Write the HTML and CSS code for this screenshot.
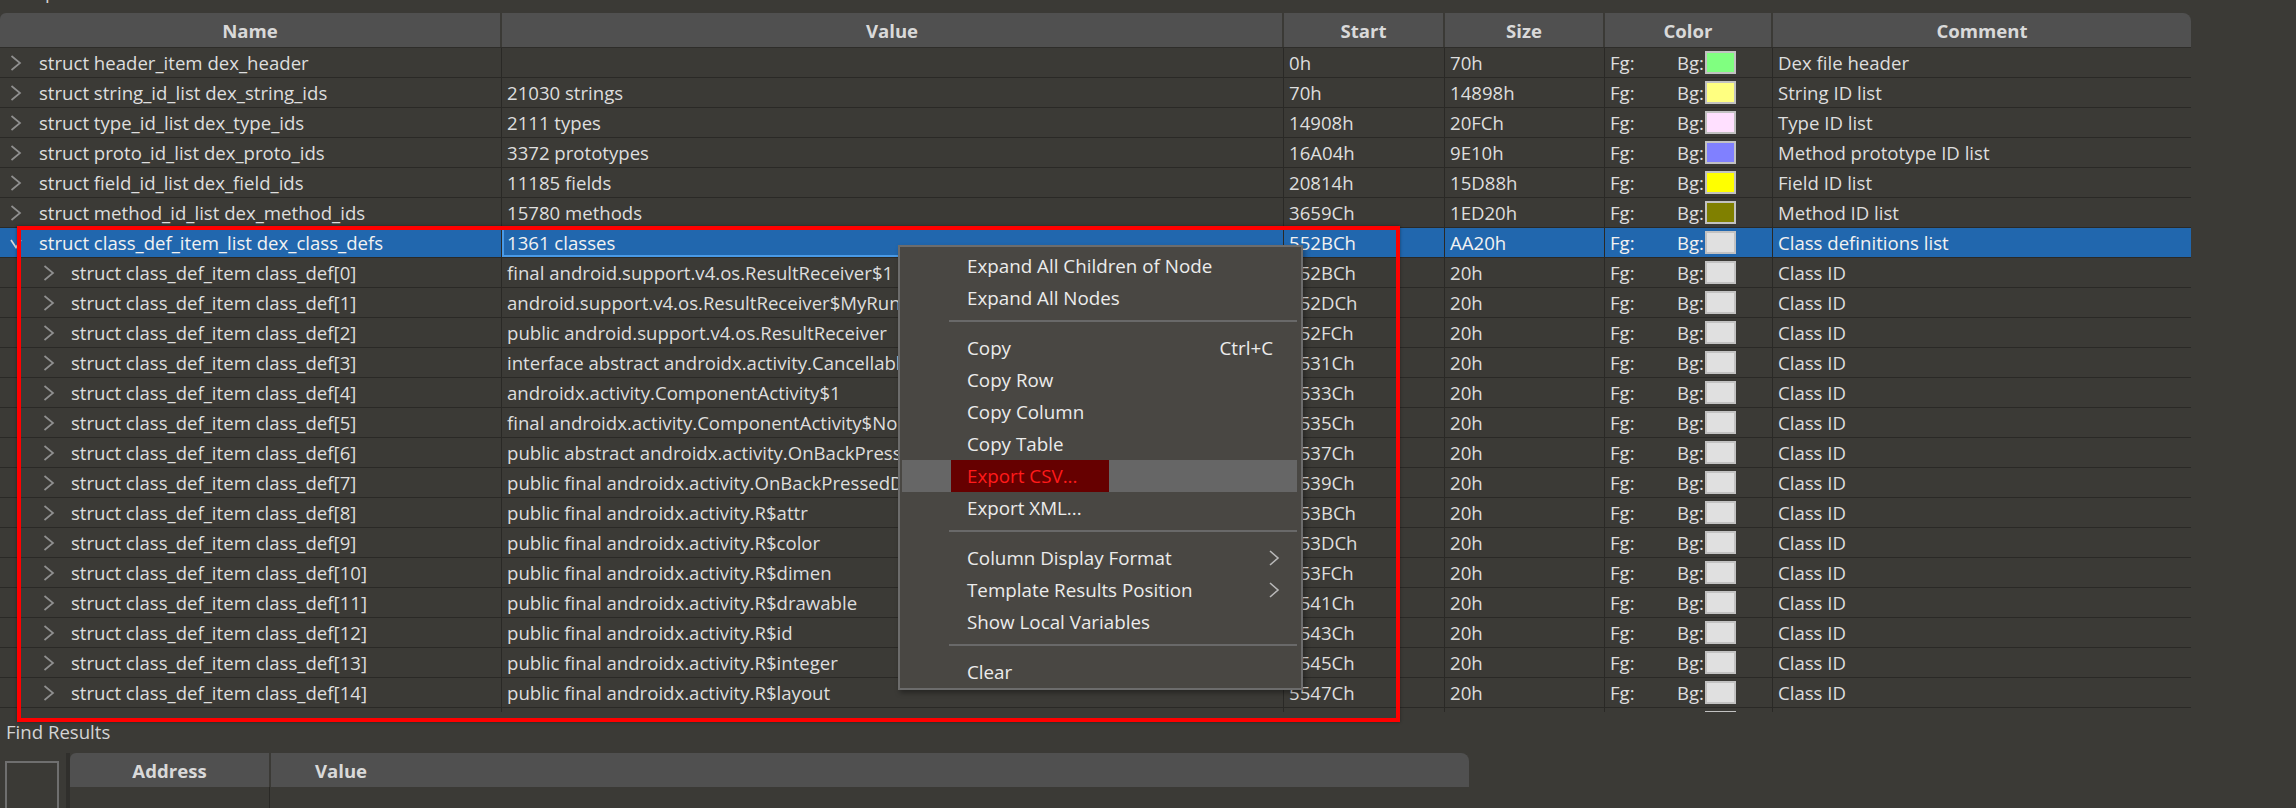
FILE: index.html
```html
<!DOCTYPE html>
<html lang="en">
<head>
<meta charset="utf-8">
<title>Template Results</title>
<link rel="stylesheet" href="styles.css">
</head>
<body>
<div class="app">
  <div class="panel-title"><span>Template Results - DEX.bt</span></div>

  <div class="grid">
    <div class="ghead">
      <div class="hcell">Name</div>
      <div class="hcell">Value</div>
      <div class="hcell">Start</div>
      <div class="hcell">Size</div>
      <div class="hcell">Color</div>
      <div class="hcell last">Comment</div>
    </div>
    <div class="gbody">
      <div class="row">
        <div class="cell name"><svg class="chev" viewBox="0 0 12 16"><path d="M1.5 1L10 8L1.5 15"/></svg><span>struct header_item dex_header</span></div>
        <div class="cell"></div>
        <div class="cell">0h</div>
        <div class="cell">70h</div>
        <div class="cell color"><span class="fg">Fg:</span><span>Bg:</span><i class="sw sw-green"></i></div>
        <div class="cell">Dex file header</div>
      </div>
      <div class="row">
        <div class="cell name"><svg class="chev" viewBox="0 0 12 16"><path d="M1.5 1L10 8L1.5 15"/></svg><span>struct string_id_list dex_string_ids</span></div>
        <div class="cell">21030 strings</div>
        <div class="cell">70h</div>
        <div class="cell">14898h</div>
        <div class="cell color"><span class="fg">Fg:</span><span>Bg:</span><i class="sw sw-lyellow"></i></div>
        <div class="cell">String ID list</div>
      </div>
      <div class="row">
        <div class="cell name"><svg class="chev" viewBox="0 0 12 16"><path d="M1.5 1L10 8L1.5 15"/></svg><span>struct type_id_list dex_type_ids</span></div>
        <div class="cell">2111 types</div>
        <div class="cell">14908h</div>
        <div class="cell">20FCh</div>
        <div class="cell color"><span class="fg">Fg:</span><span>Bg:</span><i class="sw sw-pink"></i></div>
        <div class="cell">Type ID list</div>
      </div>
      <div class="row">
        <div class="cell name"><svg class="chev" viewBox="0 0 12 16"><path d="M1.5 1L10 8L1.5 15"/></svg><span>struct proto_id_list dex_proto_ids</span></div>
        <div class="cell">3372 prototypes</div>
        <div class="cell">16A04h</div>
        <div class="cell">9E10h</div>
        <div class="cell color"><span class="fg">Fg:</span><span>Bg:</span><i class="sw sw-violet"></i></div>
        <div class="cell">Method prototype ID list</div>
      </div>
      <div class="row">
        <div class="cell name"><svg class="chev" viewBox="0 0 12 16"><path d="M1.5 1L10 8L1.5 15"/></svg><span>struct field_id_list dex_field_ids</span></div>
        <div class="cell">11185 fields</div>
        <div class="cell">20814h</div>
        <div class="cell">15D88h</div>
        <div class="cell color"><span class="fg">Fg:</span><span>Bg:</span><i class="sw sw-yellow"></i></div>
        <div class="cell">Field ID list</div>
      </div>
      <div class="row">
        <div class="cell name"><svg class="chev" viewBox="0 0 12 16"><path d="M1.5 1L10 8L1.5 15"/></svg><span>struct method_id_list dex_method_ids</span></div>
        <div class="cell">15780 methods</div>
        <div class="cell">3659Ch</div>
        <div class="cell">1ED20h</div>
        <div class="cell color"><span class="fg">Fg:</span><span>Bg:</span><i class="sw sw-olive"></i></div>
        <div class="cell">Method ID list</div>
      </div>
      <div class="row selected">
        <div class="cell name"><svg class="chev open" viewBox="0 0 12 10"><path d="M1 1L6 8.5L11 1"/></svg><span>struct class_def_item_list dex_class_defs</span></div>
        <div class="cell focus">1361 classes</div>
        <div class="cell">552BCh</div>
        <div class="cell">AA20h</div>
        <div class="cell color"><span class="fg">Fg:</span><span>Bg:</span><i class="sw sw-gray"></i></div>
        <div class="cell">Class definitions list</div>
      </div>
      <div class="row child">
        <div class="cell name"><svg class="chev" viewBox="0 0 12 16"><path d="M1.5 1L10 8L1.5 15"/></svg><span>struct class_def_item class_def[0]</span></div>
        <div class="cell">final android.support.v4.os.ResultReceiver$1</div>
        <div class="cell">552BCh</div>
        <div class="cell">20h</div>
        <div class="cell color"><span class="fg">Fg:</span><span>Bg:</span><i class="sw sw-gray"></i></div>
        <div class="cell">Class ID</div>
      </div>
      <div class="row child">
        <div class="cell name"><svg class="chev" viewBox="0 0 12 16"><path d="M1.5 1L10 8L1.5 15"/></svg><span>struct class_def_item class_def[1]</span></div>
        <div class="cell">android.support.v4.os.ResultReceiver$MyRunnable</div>
        <div class="cell">552DCh</div>
        <div class="cell">20h</div>
        <div class="cell color"><span class="fg">Fg:</span><span>Bg:</span><i class="sw sw-gray"></i></div>
        <div class="cell">Class ID</div>
      </div>
      <div class="row child">
        <div class="cell name"><svg class="chev" viewBox="0 0 12 16"><path d="M1.5 1L10 8L1.5 15"/></svg><span>struct class_def_item class_def[2]</span></div>
        <div class="cell">public android.support.v4.os.ResultReceiver</div>
        <div class="cell">552FCh</div>
        <div class="cell">20h</div>
        <div class="cell color"><span class="fg">Fg:</span><span>Bg:</span><i class="sw sw-gray"></i></div>
        <div class="cell">Class ID</div>
      </div>
      <div class="row child">
        <div class="cell name"><svg class="chev" viewBox="0 0 12 16"><path d="M1.5 1L10 8L1.5 15"/></svg><span>struct class_def_item class_def[3]</span></div>
        <div class="cell">interface abstract androidx.activity.Cancellable</div>
        <div class="cell">5531Ch</div>
        <div class="cell">20h</div>
        <div class="cell color"><span class="fg">Fg:</span><span>Bg:</span><i class="sw sw-gray"></i></div>
        <div class="cell">Class ID</div>
      </div>
      <div class="row child">
        <div class="cell name"><svg class="chev" viewBox="0 0 12 16"><path d="M1.5 1L10 8L1.5 15"/></svg><span>struct class_def_item class_def[4]</span></div>
        <div class="cell">androidx.activity.ComponentActivity$1</div>
        <div class="cell">5533Ch</div>
        <div class="cell">20h</div>
        <div class="cell color"><span class="fg">Fg:</span><span>Bg:</span><i class="sw sw-gray"></i></div>
        <div class="cell">Class ID</div>
      </div>
      <div class="row child">
        <div class="cell name"><svg class="chev" viewBox="0 0 12 16"><path d="M1.5 1L10 8L1.5 15"/></svg><span>struct class_def_item class_def[5]</span></div>
        <div class="cell">final androidx.activity.ComponentActivity$NonConfigurationInstances</div>
        <div class="cell">5535Ch</div>
        <div class="cell">20h</div>
        <div class="cell color"><span class="fg">Fg:</span><span>Bg:</span><i class="sw sw-gray"></i></div>
        <div class="cell">Class ID</div>
      </div>
      <div class="row child">
        <div class="cell name"><svg class="chev" viewBox="0 0 12 16"><path d="M1.5 1L10 8L1.5 15"/></svg><span>struct class_def_item class_def[6]</span></div>
        <div class="cell">public abstract androidx.activity.OnBackPressedCallback</div>
        <div class="cell">5537Ch</div>
        <div class="cell">20h</div>
        <div class="cell color"><span class="fg">Fg:</span><span>Bg:</span><i class="sw sw-gray"></i></div>
        <div class="cell">Class ID</div>
      </div>
      <div class="row child">
        <div class="cell name"><svg class="chev" viewBox="0 0 12 16"><path d="M1.5 1L10 8L1.5 15"/></svg><span>struct class_def_item class_def[7]</span></div>
        <div class="cell">public final androidx.activity.OnBackPressedDispatcher</div>
        <div class="cell">5539Ch</div>
        <div class="cell">20h</div>
        <div class="cell color"><span class="fg">Fg:</span><span>Bg:</span><i class="sw sw-gray"></i></div>
        <div class="cell">Class ID</div>
      </div>
      <div class="row child">
        <div class="cell name"><svg class="chev" viewBox="0 0 12 16"><path d="M1.5 1L10 8L1.5 15"/></svg><span>struct class_def_item class_def[8]</span></div>
        <div class="cell">public final androidx.activity.R$attr</div>
        <div class="cell">553BCh</div>
        <div class="cell">20h</div>
        <div class="cell color"><span class="fg">Fg:</span><span>Bg:</span><i class="sw sw-gray"></i></div>
        <div class="cell">Class ID</div>
      </div>
      <div class="row child">
        <div class="cell name"><svg class="chev" viewBox="0 0 12 16"><path d="M1.5 1L10 8L1.5 15"/></svg><span>struct class_def_item class_def[9]</span></div>
        <div class="cell">public final androidx.activity.R$color</div>
        <div class="cell">553DCh</div>
        <div class="cell">20h</div>
        <div class="cell color"><span class="fg">Fg:</span><span>Bg:</span><i class="sw sw-gray"></i></div>
        <div class="cell">Class ID</div>
      </div>
      <div class="row child">
        <div class="cell name"><svg class="chev" viewBox="0 0 12 16"><path d="M1.5 1L10 8L1.5 15"/></svg><span>struct class_def_item class_def[10]</span></div>
        <div class="cell">public final androidx.activity.R$dimen</div>
        <div class="cell">553FCh</div>
        <div class="cell">20h</div>
        <div class="cell color"><span class="fg">Fg:</span><span>Bg:</span><i class="sw sw-gray"></i></div>
        <div class="cell">Class ID</div>
      </div>
      <div class="row child">
        <div class="cell name"><svg class="chev" viewBox="0 0 12 16"><path d="M1.5 1L10 8L1.5 15"/></svg><span>struct class_def_item class_def[11]</span></div>
        <div class="cell">public final androidx.activity.R$drawable</div>
        <div class="cell">5541Ch</div>
        <div class="cell">20h</div>
        <div class="cell color"><span class="fg">Fg:</span><span>Bg:</span><i class="sw sw-gray"></i></div>
        <div class="cell">Class ID</div>
      </div>
      <div class="row child">
        <div class="cell name"><svg class="chev" viewBox="0 0 12 16"><path d="M1.5 1L10 8L1.5 15"/></svg><span>struct class_def_item class_def[12]</span></div>
        <div class="cell">public final androidx.activity.R$id</div>
        <div class="cell">5543Ch</div>
        <div class="cell">20h</div>
        <div class="cell color"><span class="fg">Fg:</span><span>Bg:</span><i class="sw sw-gray"></i></div>
        <div class="cell">Class ID</div>
      </div>
      <div class="row child">
        <div class="cell name"><svg class="chev" viewBox="0 0 12 16"><path d="M1.5 1L10 8L1.5 15"/></svg><span>struct class_def_item class_def[13]</span></div>
        <div class="cell">public final androidx.activity.R$integer</div>
        <div class="cell">5545Ch</div>
        <div class="cell">20h</div>
        <div class="cell color"><span class="fg">Fg:</span><span>Bg:</span><i class="sw sw-gray"></i></div>
        <div class="cell">Class ID</div>
      </div>
      <div class="row child">
        <div class="cell name"><svg class="chev" viewBox="0 0 12 16"><path d="M1.5 1L10 8L1.5 15"/></svg><span>struct class_def_item class_def[14]</span></div>
        <div class="cell">public final androidx.activity.R$layout</div>
        <div class="cell">5547Ch</div>
        <div class="cell">20h</div>
        <div class="cell color"><span class="fg">Fg:</span><span>Bg:</span><i class="sw sw-gray"></i></div>
        <div class="cell">Class ID</div>
      </div>
      <div class="row child">
        <div class="cell name"><svg class="chev" viewBox="0 0 12 16"><path d="M1.5 1L10 8L1.5 15"/></svg><span>struct class_def_item class_def[15]</span></div>
        <div class="cell">public final androidx.activity.R$string</div>
        <div class="cell">5549Ch</div>
        <div class="cell">20h</div>
        <div class="cell color"><span class="fg">Fg:</span><span>Bg:</span><i class="sw sw-gray"></i></div>
        <div class="cell">Class ID</div>
      </div>
    </div>
  </div>

  <div class="find-label">Find Results</div>
  <div class="find">
    <div class="find-tool"></div>
    <div class="find-grid">
      <div class="fhead">
        <div class="fh addr">Address</div>
        <div class="fh val">Value</div>
        <div class="fh rest"></div>
      </div>
      <div class="fbody">
        <div class="fcol addr"></div>
        <div class="fcol"></div>
      </div>
    </div>
  </div>
</div>

<div class="ctx-menu">
  <div class="mi">Expand All Children of Node</div>
  <div class="mi">Expand All Nodes</div>
  <div class="msep"></div>
  <div class="mi">Copy<span class="sc">Ctrl+C</span></div>
  <div class="mi">Copy Row</div>
  <div class="mi">Copy Column</div>
  <div class="mi">Copy Table</div>
  <div class="mi hot"><span class="hot-label">Export CSV...</span></div>
  <div class="mi">Export XML...</div>
  <div class="msep"></div>
  <div class="mi">Column Display Format<svg class="sub" viewBox="0 0 12 16"><path d="M2 1L10 8L2 15"/></svg></div>
  <div class="mi">Template Results Position<svg class="sub" viewBox="0 0 12 16"><path d="M2 1L10 8L2 15"/></svg></div>
  <div class="mi">Show Local Variables</div>
  <div class="msep"></div>
  <div class="mi">Clear</div>
</div>

<div class="mark"></div>
</body>
</html>
```
FILE: styles.css
```css
html, body {
  margin: 0;
  padding: 0;
}
body {
  width: 2296px;
  height: 808px;
  overflow: hidden;
  background: #3b3a36;
  font-family: "Open Sans", "Noto Sans", sans-serif;
  font-size: 18.6px;
  color: #dedede;
}

.app {
  display: flex;
  flex-direction: column;
  width: 2296px;
  height: 808px;
}

/* clipped panel caption at the very top */
.panel-title {
  height: 13px;
  overflow: hidden;
  padding-left: 7px;
}
.panel-title span {
  display: block;
  line-height: 26px;
  margin-top: -21px;
  color: #d6d6d6;
}

/* main template grid */
.grid {
  width: 2191px;
  height: 699px;
  display: flex;
  flex-direction: column;
  overflow: hidden;
  border-radius: 6px 8px 0 0;
  flex: none;
}
.ghead, .row {
  display: grid;
  grid-template-columns: 502px 782px 161px 160px 168px 418px;
}
.ghead {
  height: 35px;
  background: #505050;
  border-bottom: 1px solid #2e2d2a;
  box-sizing: border-box;
  flex: none;
}
.hcell {
  display: flex;
  align-items: center;
  justify-content: center;
  font-weight: 700;
  color: #d9d9d9;
  border-right: 2px solid #3b3a36;
}
.hcell.last { border-right: 0; }

.gbody {
  flex: 1;
  overflow: hidden;
}
.row {
  height: 30px;
  box-sizing: border-box;
  border-bottom: 1px solid #2a2926;
}
.cell {
  display: flex;
  align-items: center;
  padding-left: 5px;
  border-right: 1px solid #2a2926;
  white-space: nowrap;
  overflow: hidden;
  min-width: 0;
}
.cell:last-child { border-right: 0; }

.cell.name {
  padding-left: 10px;
  gap: 17px;
}
.row.child .cell.name { padding-left: 43px; gap: 16px; }

.chev {
  width: 12px;
  height: 16px;
  flex: none;
  fill: none;
  stroke: #8f8f8f;
  stroke-width: 1.7;
}
.chev.open {
  height: 10px;
  stroke: #d8d8d8;
  margin-top: 2px;
}

.row.selected {
  background: #2167ae;
  color: #f2f2f2;
}
.cell.focus {
  box-shadow: inset 2px 0 0 #4a9ae6, inset 0 -2px 0 #4a9ae6, inset 0 2px 0 #3f86cc;
}

.cell.color .fg {
  width: 67px;
  flex: none;
}
.sw {
  width: 31px;
  height: 23px;
  box-sizing: border-box;
  border: 2px solid #c2c2c2;
  flex: none;
  margin-left: 1px;
}
.sw-green { background: #80ff80; }
.sw-lyellow { background: #ffff80; }
.sw-pink { background: #ffe0ff; }
.sw-violet { background: #8080ff; }
.sw-yellow { background: #ffff00; }
.sw-olive { background: #808000; }
.sw-gray { background: #e0e0e0; }

/* find results */
.find-label {
  margin-top: 7px;
  line-height: 26px;
  padding-left: 6px;
  color: #d4d4d4;
  flex: none;
}
.find {
  margin-top: 8px;
  display: flex;
  padding-left: 5px;
  flex: 1;
  min-height: 0;
}
.find-tool {
  width: 54px;
  margin-top: 8px;
  border: 2px solid #6f6f6f;
  border-bottom: 0;
  box-sizing: border-box;
  flex: none;
}
.find-grid {
  margin-left: 7px;
  width: 1403px;
  border-left: 4px solid #302f2c;
  box-sizing: border-box;
  display: flex;
  flex-direction: column;
}
.fhead {
  height: 34px;
  display: flex;
  background: #505050;
  border-radius: 6px 8px 0 0;
  flex: none;
}
.fh {
  display: flex;
  align-items: center;
  justify-content: center;
  font-weight: 700;
  color: #d9d9d9;
}
.fh.addr { width: 199px; border-right: 2px solid #3b3a36; }
.fh.val { width: 140px; }
.fh.rest { flex: 1; }
.fbody {
  flex: 1;
  display: flex;
}
.fcol.addr {
  width: 199px;
  border-right: 1px solid #2a2926;
}

/* context menu overlay */
.ctx-menu {
  position: absolute;
  left: 898px;
  top: 245px;
  width: 405px;
  height: 445px;
  box-sizing: border-box;
  background: #494743;
  border: 2px solid #6c6c6c;
  padding-top: 3px;
  box-shadow: 2px 3px 5px rgba(0, 0, 0, 0.35);
  color: #ececec;
  font-size: 18.8px;
}
.mi {
  height: 32px;
  display: flex;
  align-items: center;
  padding-left: 67px;
  white-space: nowrap;
}
.mi .sc {
  margin-left: auto;
  padding-right: 28px;
}
.mi .sub {
  margin-left: auto;
  margin-right: 21px;
  width: 12px;
  height: 16px;
  fill: none;
  stroke: #b8b8b8;
  stroke-width: 1.6;
}
.mi.hot {
  background: #666666;
  margin: 0 4px 0 2px;
  padding-left: 49px;
  align-items: stretch;
}
.hot-label {
  display: flex;
  align-items: center;
  background: #660000;
  color: #ff1a1a;
  padding: 0 32px 0 16px;
}
.msep {
  height: 18px;
  box-sizing: border-box;
  padding-top: 6px;
  margin: 0 4px 0 49px;
}
.msep::before {
  content: "";
  display: block;
  height: 2px;
  background: #696969;
}

/* red annotation rectangle */
.mark {
  position: absolute;
  left: 17px;
  top: 226px;
  width: 1383px;
  height: 496px;
  box-sizing: border-box;
  border: 4px solid #ff0000;
  pointer-events: none;
  box-shadow: 0 0 3px rgba(0, 0, 0, 0.4);
}
```
